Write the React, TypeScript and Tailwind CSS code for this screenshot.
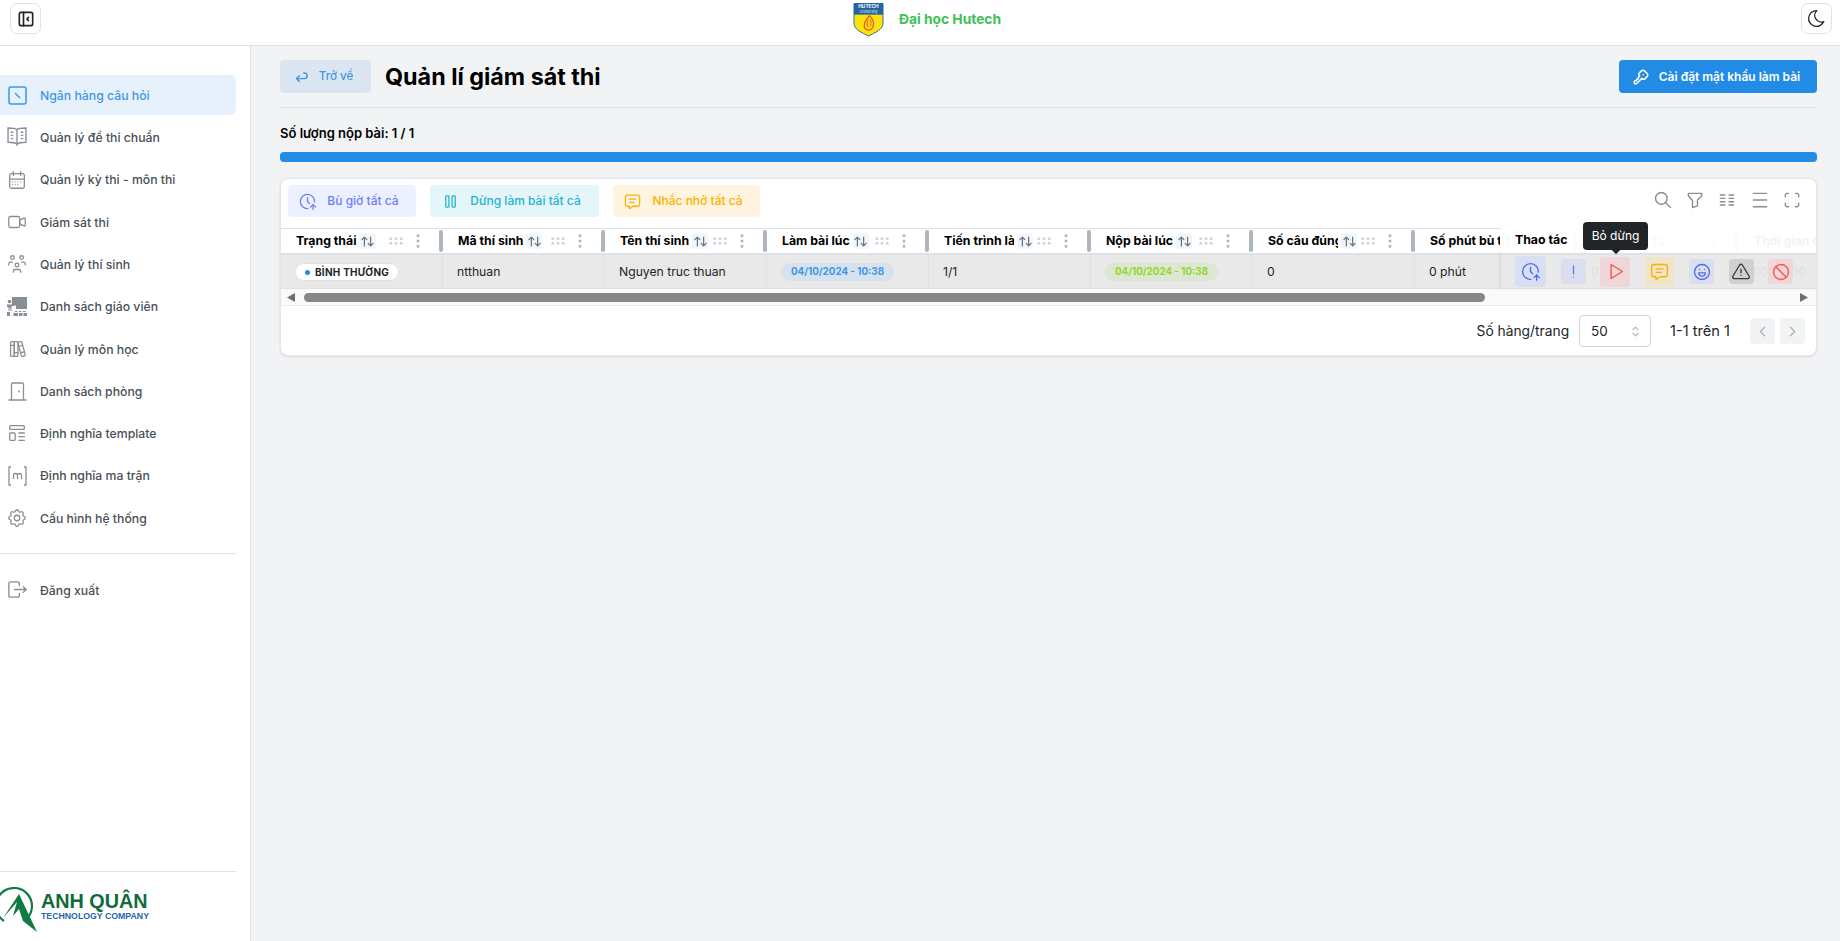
import type { ReactNode } from 'react';
import {
  TbAlertTriangle,
  TbArrowBack,
  TbArrowsSort,
  TbBan,
  TbBaselineDensityMedium,
  TbBooks,
  TbCalendarMonth,
  TbChevronLeft,
  TbChevronRight,
  TbClockUp,
  TbColumns,
  TbDotsVertical,
  TbExclamationMark,
  TbFilter,
  TbGripHorizontal,
  TbKey,
  TbLayoutSidebarLeftCollapse,
  TbLogout,
  TbMaximize,
  TbMessage,
  TbMoodHappy,
  TbMoon,
  TbPlayerPause,
  TbPlayerPlay,
  TbSearch,
  TbSelector,
  TbSettings,
  TbTemplate,
  TbUsersGroup,
  TbVideo,
} from 'react-icons/tb';

const SquareLineIcon = () => (
  <svg width="19" height="19" viewBox="0 0 19 19" fill="none" stroke="currentColor" strokeWidth="1.500">
    <rect x="1" y="1" width="17" height="17" rx="2" />
    <path d="M7 7l5 5" />
  </svg>
);

const BookIcon = () => (
  <svg width="20" height="20" viewBox="0 0 19 19" fill="none" stroke="currentColor" strokeWidth="1.300">
    <path d="M9.500 2.500C8 1 3 1 1 1v13.500c2 0 7 0 8.500 2 1.500-2 6.500-2 8.500-2V1c-2 0-7 0-8.500 1.500z" />
    <path d="M9.500 2.500v15M3.500 5h2.500M3.500 8h2.500M3.500 11h2.500M13 5h2.500M13 8h2.500M13 11h2.500" />
  </svg>
);

const TeacherIcon = () => (
  <svg width="22" height="21" viewBox="0 0 22 21" fill="currentColor">
    <path d="M6 1h15v12H10V9.500H6z" />
    <circle cx="3.500" cy="5.500" r="1.800" />
    <path d="M1 8.500h7v1.500H5.500v5h-1v-3h-1v3h-1v-4H1zM9 15h2.500v1H9zM13 15h2.500v1H13zM17 15h2.500v1H17z" />
    <path d="M7.500 17h4.500v3H7.500zM13 17h3.500v3H13zM17.500 17H21v3h-3.500zM1 16h3v4H1z" />
  </svg>
);

const DoorIcon = () => (
  <svg width="19" height="19" viewBox="0 0 19 19" fill="none" stroke="currentColor" strokeWidth="1.300">
    <path d="M0.500 18h18M3.500 18V2.200a1.200 1.200 0 0 1 1.200-1.200h9.600a1.200 1.200 0 0 1 1.200 1.200V18" />
    <circle cx="11" cy="9.500" r="0.400" />
  </svg>
);

const MatrixIcon = () => (
  <svg width="19" height="20" viewBox="0 0 19 20" fill="none" stroke="currentColor" strokeWidth="1.300">
    <path d="M3 1H1v18h2M16 1h2v18h-2" />
    <path d="M5.500 13V7.500M5.500 9c0-2 4-2 4 0v4M9.500 9c0-2 4-2 4 0v4" />
  </svg>
);

const ShieldLogo = () => (
  <svg width="31" height="35" viewBox="0 0 32 36">
    <path d="M1 1.500h30v20c0 7-8 10-15 13.500C9 31.500 1 28.500 1 21.500z" fill="#fde209" stroke="#1f6fa8" strokeWidth="1" />
    <path d="M1 1.500h30v11.500H1z" fill="#23639f" />
    <text x="16" y="6.500" textAnchor="middle" fontSize="5" fontWeight="700" fill="#fff">HUTECH</text>
    <text x="16" y="11" textAnchor="middle" fontSize="4" fill="#dbe8f5">University</text>
    <path d="M17 14c3 3 5 6 4 10-.5 3-3 5-6 5-2.500-1-4-3.500-3-7 .5-3 3-5 5-8z" fill="none" stroke="#e4572e" strokeWidth="1.300" />
    <path d="M16 18c-1.500 2-2 5-.5 8M18 18c.8 2 .8 4 0 7" fill="none" stroke="#e4572e" strokeWidth="1" />
  </svg>
);

const AnhQuanMark = () => (
  <svg width="38" height="46" viewBox="0 0 38 46" fill="none" className="shrink-0">
    <path d="M4 34A18 18 0 1 1 26 32.400" stroke="#0f7a43" strokeWidth="2.200" />
    <path d="M19 7L37 45L23 34L19 22L13 29L17 15L3 31Z" fill="#0f7a43" />
  </svg>
);

const navItems: { label: string; icon: ReactNode }[] = [
  { label: 'Quản lý đề thi chuẩn', icon: <BookIcon /> },
  { label: 'Quản lý kỳ thi - môn thi', icon: <TbCalendarMonth size={22} strokeWidth={1.4} /> },
  { label: 'Giám sát thi', icon: <TbVideo size={22} strokeWidth={1.4} /> },
  { label: 'Quản lý thí sinh', icon: <TbUsersGroup size={22} strokeWidth={1.4} /> },
  { label: 'Danh sách giáo viên', icon: <TeacherIcon /> },
  { label: 'Quản lý môn học', icon: <TbBooks size={22} strokeWidth={1.4} /> },
  { label: 'Danh sách phòng', icon: <DoorIcon /> },
  { label: 'Định nghĩa template', icon: <TbTemplate size={22} strokeWidth={1.4} /> },
  { label: 'Định nghĩa ma trận', icon: <MatrixIcon /> },
  { label: 'Cấu hình hệ thống', icon: <TbSettings size={22} strokeWidth={1.4} /> },
];

function NavItem({ label, icon, active }: { label: string; icon: ReactNode; active?: boolean }) {
  return (
    <div
      className={`flex h-10 items-center rounded-r-[5px] text-[12.25px] font-medium ${
        active ? 'bg-[#e7f1fb] text-[#3f97e8]' : 'text-[#495057]'
      }`}
    >
      <span className={`flex w-10 shrink-0 items-center justify-center pr-[6px] ${active ? 'text-[#339af0]' : 'text-[#868e96]'}`}>
        {icon}
      </span>
      <span className="pt-[2px]">{label}</span>
    </div>
  );
}

function Sidebar() {
  return (
    <aside className="flex w-[251px] shrink-0 flex-col border-r border-[#dee2e6] bg-white pr-[14px] pt-[29px]">
      <nav className="flex flex-col gap-[2.3px]">
        <NavItem active label="Ngân hàng câu hỏi" icon={<SquareLineIcon />} />
        {navItems.map((item) => (
          <NavItem key={item.label} label={item.label} icon={item.icon} />
        ))}
      </nav>
      <div className="mt-[15px] border-t border-[#dee2e6] pt-[16px]">
        <NavItem label="Đăng xuất" icon={<TbLogout size={23} strokeWidth={1.4} />} />
      </div>
      <div className="mt-auto flex h-[70px] items-start gap-[3px] border-t border-[#dee2e6] pt-[15px]">
        <AnhQuanMark />
        <div className="flex flex-col font-['Liberation_Sans',sans-serif] font-bold">
          <span className="mt-[5px] text-[19.8px] leading-[18px] text-[#0f6b3a]">ANH QUÂN</span>
          <span className="origin-left scale-x-[0.92] whitespace-nowrap text-[9.5px] leading-[12px] text-[#2467a8]">TECHNOLOGY COMPANY</span>
        </div>
      </div>
    </aside>
  );
}

const columns = [
  'Trạng thái',
  'Mã thí sinh',
  'Tên thí sinh',
  'Làm bài lúc',
  'Tiến trình làm bài',
  'Nộp bài lúc',
  'Số câu đúng',
  'Số phút bù thêm',
  'Thời gian',
  'Thời gian còn lại',
];

const DateBadge = ({ color }: { color: 'blue' | 'green' }) => (
  <span
    className={`flex h-[18px] w-[113px] items-center justify-center rounded-full text-[9.8px] font-bold ${
      color === 'blue' ? 'bg-[#d6e2ee] text-[#3f97e8]' : 'bg-[#dde6d1] text-[#94d82d]'
    }`}
  >
    04/10/2024 - 10:38
  </span>
);

const cells: ReactNode[] = [
  <span className="flex h-[18px] w-[104px] items-center gap-[5px] rounded-full border border-[#dee2e6] bg-white pl-[9px] text-[10px] font-bold tracking-[0.25px] text-[#212529]">
    <span className="size-[5px] rounded-full bg-[#228be6]" />
    BÌNH THƯỜNG
  </span>,
  'ntthuan',
  'Nguyen truc thuan',
  <DateBadge color="blue" />,
  '1/1',
  <DateBadge color="green" />,
  '0',
  '0 phút',
  '0',
  '00:00:00',
];

const actionButtons = [
  { icon: <TbClockUp size={21} strokeWidth={1.6} />, box: 'size-[31px] bg-[#d9dff2] text-[#4c6ef5]' },
  { icon: <TbExclamationMark size={19} strokeWidth={1.6} />, box: 'size-[25px] bg-[#dbdeee] text-[#5c7cfa]' },
  { icon: <TbPlayerPlay size={21} strokeWidth={1.6} />, box: 'size-[30px] bg-[#efd6d8] text-[#fa5252]' },
  { icon: <TbMessage size={21} strokeWidth={1.6} />, box: 'size-[30px] bg-[#efe5ca] text-[#fcb000]' },
  { icon: <TbMoodHappy size={20} strokeWidth={1.6} />, box: 'size-[25px] bg-[#dbdeee] text-[#4c6ef5]' },
  { icon: <TbAlertTriangle size={20} strokeWidth={1.6} />, box: 'size-[25px] bg-[#d0d0d0] text-[#343a40]' },
  { icon: <TbBan size={20} strokeWidth={1.6} />, box: 'size-[25px] bg-[#efd6d8] text-[#fa5252]' },
];

function DataTable() {
  return (
    <div className="relative">
      <div className="flex h-[25px] overflow-hidden border-t border-[#dee2e6]">
        {columns.map((title) => (
          <div key={title} className="relative flex w-[162px] shrink-0 items-center pl-[15px] text-[12.3px] font-bold text-black">
            <span className="max-w-[70px] overflow-hidden whitespace-nowrap">{title}</span>
            <span className="ml-[3px] flex size-[16px] shrink-0 items-center justify-center rounded-[3px] bg-[#f1f6fb] text-[#6c757d]">
              <TbArrowsSort size={15} />
            </span>
            <span className="absolute left-[106px] text-[#ced4da]">
              <TbGripHorizontal size={18} />
            </span>
            <span className="absolute left-[128px] text-[#adb5bd]">
              <TbDotsVertical size={18} />
            </span>
            <span className="absolute right-0 top-[1px] h-[22px] w-1 rounded-sm bg-[#adb5bd]" />
          </div>
        ))}
      </div>
      <div className="flex h-[36px] overflow-hidden border-y border-[#dee2e6] border-t-2 bg-[#e9e9e9]">
        {cells.map((cell, i) => (
          <div key={columns[i]} className="flex w-[162px] shrink-0 items-center border-r border-[#dee2e6] pl-[14px] text-[12.2px] text-[#212529]">
            <span className="pt-[1px]">{cell}</span>
          </div>
        ))}
      </div>
      {/* cot thao tac ghim ben phai */}
      <div className="absolute bottom-0 right-0 top-0 flex w-[315px] flex-col">
        <div className="flex h-[25px] shrink-0 items-center bg-white/95 pl-[14px] text-[12.3px] font-bold text-black">Thao tác</div>
        <div className="flex flex-1 items-center gap-[14.500px] border-y border-[#dee2e6] border-t-2 bg-[#e9e9e9]/95 pl-[14px] shadow-[-2px_0_2px_rgba(0,0,0,0.06)]">
          {actionButtons.map((action, i) => (
            <span key={i} className={`flex shrink-0 items-center justify-center rounded-[4px] ${action.box}`}>
              {action.icon}
            </span>
          ))}
        </div>
      </div>
      <div className="absolute left-[1302px] top-[-6px] flex h-[28px] w-[65px] items-center justify-center rounded-[4px] bg-[#212529] text-[12px] text-white">
        Bỏ dừng
        <span className="absolute -bottom-[3px] left-[30px] size-[6px] rotate-45 bg-[#212529]" />
      </div>
    </div>
  );
}

function FakeScrollbar() {
  return (
    <div className="flex h-[17px] items-center border-b border-[#e9ecef] bg-[#fafafa] pl-[6px] pr-[8px]">
      <svg width="8" height="9" viewBox="0 0 8 9" fill="#6e6e6e">
        <path d="M8 0v9L0 4.500z" />
      </svg>
      <div className="ml-[9px] h-[9px] w-[1181px] rounded-full bg-[#878787]" />
      <svg width="8" height="9" viewBox="0 0 8 9" fill="#6e6e6e" className="ml-auto">
        <path d="M0 0v9l8-4.500z" />
      </svg>
    </div>
  );
}

function Pagination() {
  return (
    <div className="flex h-[49px] items-center justify-end pr-[11px] pt-[1px] text-[13.8px] text-[#212529]">
      <span className="pt-[1px]">Số hàng/trang</span>
      <div className="ml-[10px] flex h-[32px] w-[72px] items-center justify-between rounded-[4px] border border-[#ced4da] pl-[11px] pr-[7px] text-[13.5px]">
        50
        <TbSelector size={15} className="text-[#adb5bd]" />
      </div>
      <span className="ml-[19px] pt-[1px] text-[14.6px]">1-1 trên 1</span>
      <div className="ml-[20px] flex gap-[5px]">
        <span className="flex h-[26px] w-[25px] items-center justify-center rounded-[4px] bg-[#f1f3f5] text-[#adb5bd]">
          <TbChevronLeft size={17} />
        </span>
        <span className="flex h-[26px] w-[25px] items-center justify-center rounded-[4px] bg-[#f1f3f5] text-[#adb5bd]">
          <TbChevronRight size={17} />
        </span>
      </div>
    </div>
  );
}

export default function App() {
  return (
    <div className="flex h-screen flex-col overflow-hidden bg-[#f1f3f5] font-['Inter',sans-serif]">
      <header className="flex h-[46px] shrink-0 items-start justify-between border-b border-[#dee2e6] bg-white pl-[10px] pr-[8px] pt-[3px]">
        <span className="flex size-[31px] items-center justify-center rounded-[7px] border border-[#dee2e6] text-[#212529]">
          <TbLayoutSidebarLeftCollapse size={20} />
        </span>
        <div className="ml-[12px] -mt-[1px] flex items-center gap-[15px]">
          <ShieldLogo />
          <span className="text-[13.8px] font-bold text-[#40c057]">Đại học Hutech</span>
        </div>
        <span className="flex size-[31px] items-center justify-center rounded-[7px] border border-[#dee2e6] text-[#212529]">
          <TbMoon size={21} strokeWidth={1.5} />
        </span>
      </header>

      <div className="flex min-h-0 flex-1">
        <Sidebar />
        <main className="min-w-0 flex-1 pl-[29px] pr-[23px] pt-[14px]">
          <div className="flex items-center justify-between border-b border-[#dee2e6] pb-[14px]">
            <div className="flex items-center gap-[14px]">
              <button className="flex h-[33px] w-[91px] items-center justify-center gap-[9px] rounded-[4px] bg-[#dce6f2] pr-[5px] text-[11.6px] font-medium text-[#3f97e8]">
                <TbArrowBack size={17} />
                Trở về
              </button>
              <h1 className="text-[23.3px] font-bold leading-[33px] text-black">Quản lí giám sát thi</h1>
            </div>
            <button className="flex h-[33px] w-[198px] items-center justify-center gap-[9px] rounded-[4px] bg-[#228be6] pr-[4px] text-[12px] font-semibold text-white">
              <TbKey size={18} />
              Cài đặt mật khẩu làm bài
            </button>
          </div>

          <p className="mt-[16px] text-[13px] font-semibold leading-[18px] text-black">Số lượng nộp bài: 1 / 1</p>
          <div className="mt-[10px] h-[10px] rounded-[4px] bg-[#228be6]" />

          <section className="mt-[16px] overflow-hidden rounded-[8px] border border-[#e2e5e9] bg-white shadow-[0_1px_3px_rgba(0,0,0,0.1)]">
            <div className="flex h-[49px] items-start justify-between pl-[7px] pr-[14px] pt-[6px]">
              <div className="flex gap-[14px]">
                <button className="flex h-[32px] w-[128px] items-center justify-center gap-[10px] rounded-[4px] bg-[#edf0ff] pr-[7px] text-[12px] font-medium text-[#6c7ef5]">
                  <TbClockUp size={19} strokeWidth={1.6} />
                  Bù giờ tất cả
                </button>
                <button className="flex h-[32px] w-[169px] items-center justify-center gap-[10px] rounded-[4px] bg-[#e4f6f9] pr-[7px] text-[12px] font-medium text-[#22b4c9]">
                  <TbPlayerPause size={19} strokeWidth={1.6} />
                  Dừng làm bài tất cả
                </button>
                <button className="flex h-[32px] w-[147px] items-center justify-center gap-[10px] rounded-[4px] bg-[#fff4e0] pr-[7px] text-[12px] font-medium text-[#fcb000]">
                  <TbMessage size={19} strokeWidth={1.6} />
                  Nhắc nhở tất cả
                </button>
              </div>
              <div className="flex items-center gap-[12.300px] pt-[5px] text-[#868e96]">
                <TbSearch size={20} strokeWidth={1.7} />
                <TbFilter size={20} strokeWidth={1.7} />
                <TbColumns size={20} strokeWidth={1.7} />
                <TbBaselineDensityMedium size={20} strokeWidth={1.7} />
                <TbMaximize size={20} strokeWidth={1.7} />
              </div>
            </div>
            <DataTable />
            <FakeScrollbar />
            <Pagination />
          </section>
        </main>
      </div>
    </div>
  );
}
